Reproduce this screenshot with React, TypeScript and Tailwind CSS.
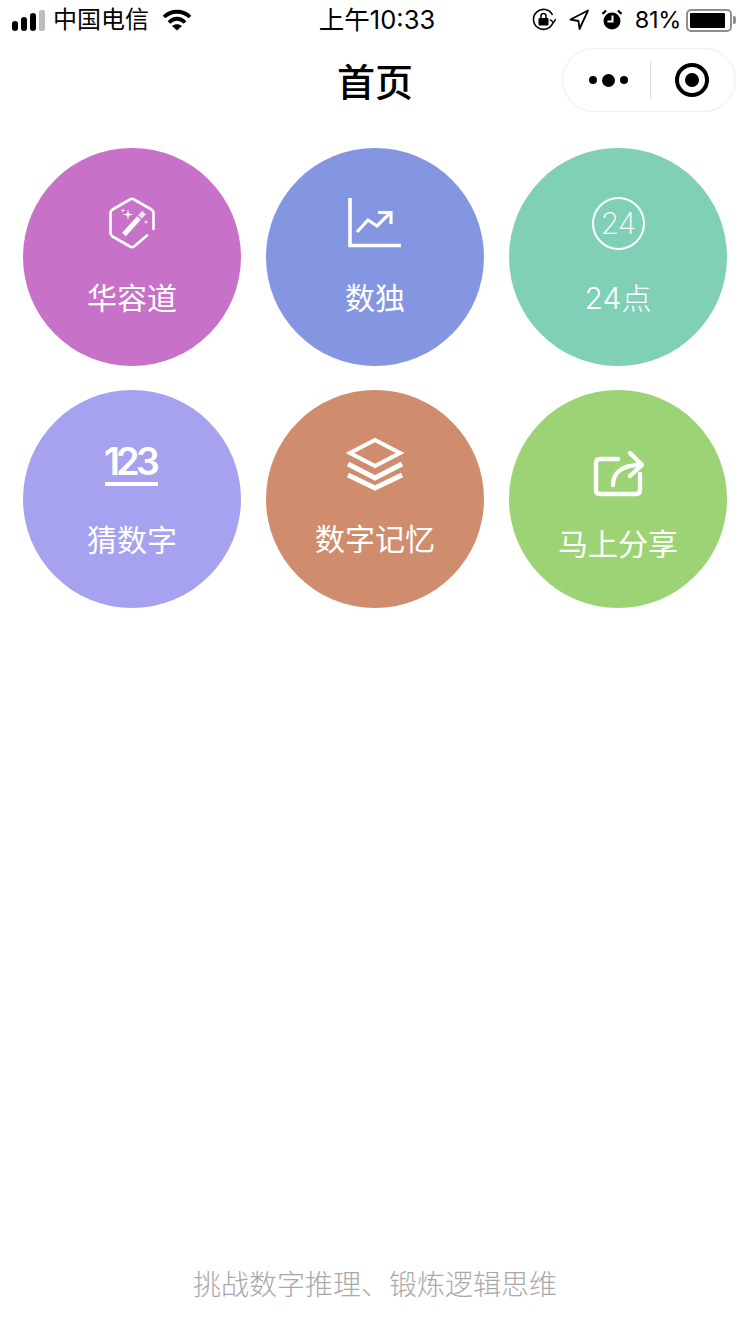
import React from 'react';

const fontStack = "font-['Inter','Noto_Sans_CJK_SC',sans-serif]";

function WandIcon() {
  return (
    <svg width="48" height="54" viewBox="0 0 48 54" fill="none" stroke="white" strokeLinecap="round" strokeLinejoin="round">
      <path d="M39 39.500 L26 50.500 Q24 52 22 50.500 L4.500 40.500 Q2.500 39 2.500 37 V17 Q2.500 15 4.500 13.500 L22 3.500 Q24 2 26 3.500 L43.500 13.500 Q45.500 15 45.500 17 V33" strokeWidth="2.600" />
      <path d="M16 38.500 L31 22" strokeWidth="5" strokeLinecap="butt" />
      <path d="M32 21 L36 16.500" strokeWidth="5" strokeLinecap="butt" strokeOpacity="0.8" />
      <path d="M20 13 L21 17.500 L25.500 18.500 L21 19.500 L20 24 L19 19.500 L14.500 18.500 L19 17.500 Z" fill="white" stroke="none" />
      <path d="M15 12 L15.500 14 L17.500 14.500 L15.500 15 L15 17 L14.500 15 L12.500 14.500 L14.500 14 Z" fill="white" stroke="none" />
      <path d="M38 23.500 L38.500 25.500 L40.500 26 L38.500 26.500 L38 28.500 L37.500 26.500 L35.500 26 L37.500 25.500 Z" fill="white" stroke="none" />
    </svg>
  );
}

function ChartIcon() {
  return (
    <svg width="54" height="52" viewBox="0 0 54 52" fill="none" stroke="white" strokeWidth="3.600">
      <path d="M2 1 V48.500 H53" />
      <path d="M9 35 L20 23 L29 29 L43 15" strokeWidth="3.200" />
      <path d="M30 15.500 H43 V27" strokeWidth="3.200" />
    </svg>
  );
}

function LayersIcon() {
  return (
    <svg width="58" height="54" viewBox="0 0 58 54" fill="none" stroke="white" strokeWidth="4">
      <path d="M29 3 L54 16 L29 29 L4 16 Z" />
      <path d="M2 27 L29 41 L56 27" strokeWidth="5" />
      <path d="M2 38 L29 51 L56 38" strokeWidth="5" />
    </svg>
  );
}

function ShareIcon() {
  return (
    <svg width="52" height="48" viewBox="0 0 52 48" fill="none" stroke="white" strokeWidth="4.400" strokeLinecap="round" strokeLinejoin="round">
      <path d="M26 9 H8 Q4 9 4 13 V40 Q4 44 8 44 H44 Q48 44 48 40 V24" />
      <path d="M21 35 C21 24 28 15 49 15" />
      <path d="M38 3 L50 15 L38 26" />
    </svg>
  );
}

const items = [
  { label: '华容道', bg: 'bg-[#c771c9]', weight: 'font-normal', icon: <WandIcon />, box: 'h-[54px] mt-[48px]', labelGap: 'mt-[30px]' },
  { label: '数独', bg: 'bg-[#8496e1]', weight: 'font-normal', icon: <ChartIcon />, box: 'h-[52px] mt-[49px]', labelGap: 'mt-[31px]' },
  {
    label: '24点',
    bg: 'bg-[#80cfb7]',
    weight: 'font-light',
    icon: (
      <div className="w-[53px] h-[53px] rounded-full border-2 border-white flex items-center justify-center text-[30px] font-extralight text-white tracking-[-1px]">24</div>
    ),
    box: 'h-[53px] mt-[49px]',
    labelGap: 'mt-[30px]',
  },
  {
    label: '猜数字',
    bg: 'bg-[#a6a2ef]',
    weight: 'font-normal',
    icon: (
      <div className="flex flex-col items-center">
        <span className="text-[38px] leading-[36px] font-semibold text-white tracking-[-4px] pr-[4px]">123</span>
        <span className="block w-[53px] h-[4px] bg-white mt-[3px]" />
      </div>
    ),
    box: 'h-[43px] mt-[53px]',
    labelGap: 'mt-[36px]',
  },
  { label: '数字记忆', bg: 'bg-[#cf8d6e]', weight: 'font-normal', icon: <LayersIcon />, box: 'h-[54px] mt-[47px]', labelGap: 'mt-[30px]' },
  { label: '马上分享', bg: 'bg-[#9cd375]', weight: 'font-normal', icon: <ShareIcon />, box: 'h-[48px] mt-[60px]', labelGap: 'mt-[28px]' },
];

function StatusBar() {
  return (
    <div className="h-[40px] flex items-center justify-between pl-[12px] pr-[14px] text-black">
      <div className="flex items-center w-[266px]">
        <svg width="34" height="22" viewBox="0 0 34 22">
          <rect x="0" y="12" width="6" height="10" rx="3" fill="#000" />
          <rect x="9" y="8" width="6" height="14" rx="3" fill="#000" />
          <rect x="18" y="4" width="6" height="18" rx="3" fill="#000" />
          <rect x="27" y="1" width="6" height="21" rx="2" fill="#bdbdbd" />
        </svg>
        <span className="ml-[7px] text-[24px] leading-[28px]">中国电信</span>
        <svg className="ml-[13px]" width="30" height="22" viewBox="0 0 30 22" fill="none" stroke="#000" strokeWidth="3.800">
          <path d="M2 8 C9 1 21 1 28 8" />
          <path d="M7 13.500 C12 8.500 18 8.500 23 13.500" />
          <path d="M15 21.500 L10 17 C13 14.500 17 14.500 20 17 Z" fill="#000" stroke="none" />
        </svg>
      </div>
      <span className="text-[25.500px] leading-[28px]">上午10:33</span>
      <div className="flex items-center justify-end w-[260px]">
        <svg width="24" height="24" viewBox="0 0 24 24" fill="none" stroke="#000" strokeWidth="1.600">
          <path d="M21 14.500 A10 10 0 1 1 20.500 7" />
          <path d="M18 11.500 L21.500 14.500 L24 11" strokeWidth="1.400" />
          <rect x="6.500" y="10" width="10" height="7.500" rx="1" fill="#000" stroke="none" />
          <path d="M9 10 V8 A2.500 2.500 0 0 1 14 8 V10" strokeWidth="1.500" />
        </svg>
        <svg className="ml-[13px]" width="20" height="22" viewBox="0 0 20 22" fill="none" stroke="#000" strokeWidth="1.800" strokeLinejoin="round">
          <path d="M19 1.500 L10.500 20 L9.500 12 L1.500 10.500 Z" />
        </svg>
        <svg className="ml-[12px]" width="22" height="22" viewBox="0 0 22 22">
          <circle cx="11" cy="12" r="8.500" fill="#000" />
          <path d="M11.500 6.500 V12.500 H6.500" fill="none" stroke="#fff" strokeWidth="2" />
          <path d="M1.500 5 L5 1.500 M20.500 5 L17 1.500" stroke="#000" strokeWidth="2.200" />
        </svg>
        <span className="ml-[12px] text-[23.500px] leading-[28px] tracking-[-0.3px]">81%</span>
        <div className="ml-[5px] w-[46px] h-[23px] rounded-[5px] border-2 border-[#8e8e8e] p-[2px]">
          <div className="h-full w-[35px] bg-black rounded-[1px]" />
        </div>
        <span className="ml-[1px] w-[3px] h-[8px] bg-[#8e8e8e] rounded-r-[2px]" />
      </div>
    </div>
  );
}

function NavBar() {
  return (
    <div className="relative h-[88px] flex items-center justify-center pb-[4px]">
      <h1 className="text-[38px] leading-[44px] font-medium text-black">首页</h1>
      <div className="absolute right-[14px] top-[8px] w-[174px] h-[64px] rounded-full border border-[#eeeeee] flex items-center">
        <div className="w-[87px] flex items-center justify-center gap-[5px] pl-[3px]">
          <span className="w-[8px] h-[8px] rounded-full bg-black" />
          <span className="w-[13px] h-[13px] rounded-full bg-black" />
          <span className="w-[8px] h-[8px] rounded-full bg-black" />
        </div>
        <span className="w-px h-[38px] bg-[#dddddd]" />
        <div className="flex-1 flex items-center justify-center pr-[2px]">
          <div className="w-[34px] h-[34px] rounded-full border-[4px] border-black flex items-center justify-center">
            <span className="w-[14px] h-[14px] rounded-full bg-black" />
          </div>
        </div>
      </div>
    </div>
  );
}

export default function App() {
  return (
    <div className={`w-[750px] h-[1334px] bg-white flex flex-col ${fontStack}`}>
      <StatusBar />
      <NavBar />
      <div className="mt-[20px] px-[23px] grid grid-cols-3 gap-x-[25px] gap-y-[24px]">
        {items.map((item) => (
          <div key={item.label} className={`w-[218px] h-[218px] rounded-full flex flex-col items-center ${item.bg}`}>
            <div className={`flex items-center justify-center ${item.box}`}>{item.icon}</div>
            <span className={`text-[30px] leading-[36px] text-white ${item.weight} ${item.labelGap}`}>{item.label}</span>
          </div>
        ))}
      </div>
      <div className="mt-auto pb-[31px] text-center text-[28px] leading-[36px] font-light text-[#a9a9a9]">
        挑战数字推理、锻炼逻辑思维
      </div>
    </div>
  );
}
